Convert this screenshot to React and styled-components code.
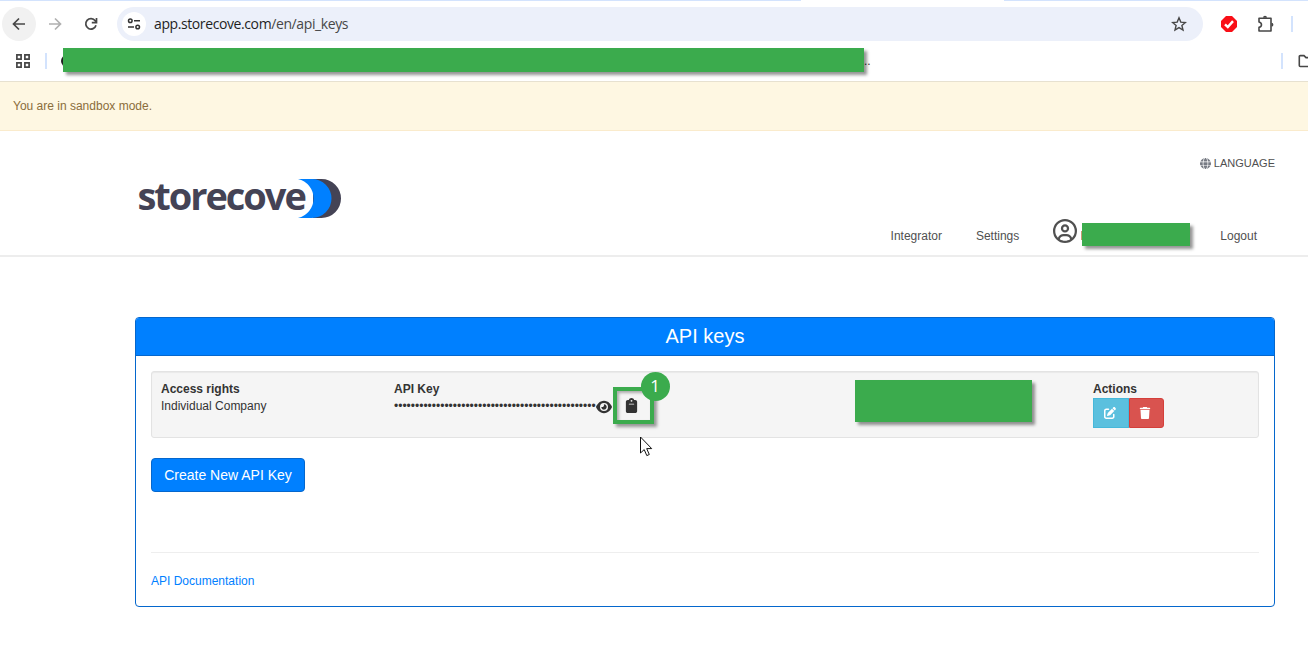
import React from "react";
import styled, { createGlobalStyle } from "styled-components";
import { FaGlobe, FaEye, FaClipboard, FaPenToSquare, FaTrash, FaRegCircleUser } from "react-icons/fa6";

const GlobalStyle = createGlobalStyle`
  *, *::before, *::after { box-sizing: border-box; }
  html, body { margin: 0; background: #fff; overflow: hidden; }
  body { font: 12px/17px "Liberation Sans", Arial, sans-serif; color: #333; }
  svg { display: block; flex: none; }
`;

const Page = styled.div`
  width: 1308px;
  height: 648px;
  overflow: hidden;
`;

/* Browser window */
const TabEdge = styled.div`
  display: flex;
  justify-content: space-between;
  height: 1px;
  background: #fff;
`;
const TabEdgePart = styled.div`
  width: ${(p) => p.$width}px;
  background: #d3e3fd;
`;
const Toolbar = styled.div`
  display: flex;
  align-items: center;
  height: 46px;
  padding-left: 2px;
`;
const RoundButton = styled.div`
  display: flex;
  align-items: center;
  justify-content: center;
  width: 34px;
  height: 34px;
  border-radius: 50%;
  margin-right: ${(p) => p.$gap || 0}px;
  background: ${(p) => (p.$active ? "#f1f1f1" : "transparent")};
`;
const AddressBar = styled.div`
  display: flex;
  align-items: center;
  width: 1086px;
  height: 34px;
  margin-left: 9px;
  padding: 0 16px 0 5px;
  border-radius: 17px;
  background: #ecf0fa;
`;
const SiteInfo = styled.div`
  display: flex;
  align-items: center;
  justify-content: center;
  width: 24px;
  height: 24px;
  border-radius: 50%;
  background: #fff;
`;
const Url = styled.div`
  flex: 1;
  margin-left: 8px;
  font: 14px/20px "Open Sans", "Noto Sans", sans-serif;
  letter-spacing: -0.4px;
  color: #474747;
  b { font-weight: 400; color: #1f1f1f; }
`;
const Separator = styled.div`
  width: 2px;
  height: 16px;
  background: #d3e3fd;
`;
const Extensions = styled.div`
  display: flex;
  align-items: center;
  gap: 20px;
  margin-left: 18px;
  ${Separator} { margin-left: -4px; }
`;
const Bookmarks = styled.div`
  display: flex;
  align-items: center;
  height: 34px;
  padding: 0 0 6px 16px;
  & > ${Separator} { margin-left: 15px; }
`;
const HiddenBookmarks = styled.div`
  display: flex;
  align-items: center;
  margin-left: 14px;
  margin-right: auto;
`;
const Favicon = styled.div`
  width: 12px;
  height: 12px;
  margin-right: -10px;
  border-radius: 50%;
  background: #222;
`;
const Redaction = styled.div`
  position: relative;
  width: ${(p) => p.$width}px;
  height: ${(p) => p.$height}px;
  background: #3bab4d;
  box-shadow: 3px 3px 3px rgba(0, 0, 0, 0.42);
`;
const BookmarkRedaction = styled(Redaction)`
  margin-top: -2px;
`;
const FolderIcon = styled.svg`
  margin-left: 15px;
`;

/* Web page */
const Alert = styled.div`
  height: 50px;
  padding: 16px 13px;
  border-top: 1px solid #e7e1d0;
  border-bottom: 1px solid #faebcc;
  background: #fef7e2;
  color: #8a6d3b;
`;
const Header = styled.header`
  display: flex;
  justify-content: space-between;
  height: 126px;
  padding: 0 33px 0 137px;
  border-bottom: 2px solid #ededed;
`;
const Logo = styled.svg`
  margin-top: 29px;
`;
const HeaderRight = styled.div`
  display: flex;
  flex-direction: column;
  align-items: flex-end;
  color: #505050;
`;
const Language = styled.div`
  display: flex;
  align-items: center;
  gap: 3px;
  margin-top: 24px;
  font-size: 11px;
  svg { color: #777b84; }
`;
const Nav = styled.nav`
  display: flex;
  align-items: flex-start;
  height: 27px;
  margin-top: 47px;
  padding-right: 18px;
`;
const NavItem = styled.div`
  height: 17px;
  margin: 9px ${(p) => p.$gap || 0}px 0 0;
`;
const Account = styled.div`
  display: flex;
  gap: 5px;
  margin-right: 30px;
  ${Redaction} { margin-top: 4px; }
  ${Redaction}::before {
    content: "";
    position: absolute;
    left: -1px;
    top: 8px;
    width: 1px;
    height: 9px;
    background: #c79b72;
  }
`;
const Panel = styled.main`
  width: 1140px;
  height: 290px;
  margin: 60px 0 0 135px;
  border: 1px solid #0567cd;
  border-radius: 4px;
`;
const PanelTitle = styled.h1`
  height: 38px;
  margin: 0;
  border-bottom: 1px solid #0567cd;
  border-radius: 3px 3px 0 0;
  background: #0080ff;
  color: #fff;
  font-size: 20px;
  font-weight: 400;
  line-height: 36px;
  text-align: center;
`;
const PanelBody = styled.div`
  padding: 15px;
`;
const KeyRow = styled.section`
  display: grid;
  grid-template-columns: 233px 461px 238px 1fr;
  height: 67px;
  padding: 8px 9px;
  border: 1px solid #e3e3e3;
  border-radius: 3px;
  background: #f5f5f5;
  box-shadow: inset 0 1px 1px rgba(0, 0, 0, 0.05);
`;
const Label = styled.div`
  height: 18px;
  padding-top: 1px;
  font-weight: 700;
`;
const Value = styled.div`
  display: flex;
  align-items: center;
  height: 17px;
`;
const Secret = styled.span`
  width: 202px;
  white-space: nowrap;
`;
const Callout = styled.div`
  position: relative;
  display: flex;
  align-items: center;
  width: 41px;
  height: 37px;
  margin: -2px 0 0 1px;
  padding-left: 7px;
  border: 4px solid #3bab4d;
  box-shadow: 3px 3px 3px rgba(0, 0, 0, 0.38), inset 2px 2px 3px rgba(0, 0, 0, 0.3);
`;
const StepBadge = styled.span`
  position: absolute;
  top: -19px;
  right: -20px;
  width: 29px;
  height: 29px;
  border-radius: 50%;
  background: #3bab4d;
  color: #fff;
  font: 17px/28px "Open Sans", "Noto Sans", sans-serif;
  text-align: center;
  text-indent: -1px;
`;
const Pointer = styled.svg`
  position: absolute;
  left: 23px;
  top: 45px;
`;
const ButtonGroup = styled.div`
  display: flex;
`;
const IconButton = styled.div`
  display: flex;
  align-items: center;
  justify-content: center;
  width: ${(p) => p.$width}px;
  height: 30px;
  padding: 0 3px 1px 0;
  border: 1px solid ${(p) => (p.$danger ? "#d43f3a" : "#46b8da")};
  border-radius: ${(p) => (p.$danger ? "0 3px 3px 0" : "0")};
  background: ${(p) => (p.$danger ? "#d9534f" : "#5bc0de")};
  color: #fff;
`;
const CreateButton = styled.button`
  display: block;
  width: 154px;
  height: 34px;
  margin-top: 20px;
  padding: 0;
  border: 1px solid #0567cd;
  border-radius: 4px;
  background: #0080ff;
  color: #fff;
  font: 14px/32px "Liberation Sans", Arial, sans-serif;
  white-space: nowrap;
`;
const Documentation = styled.div`
  margin-top: 60px;
  padding-top: 20px;
  border-top: 1px solid #eee;
  color: #0080ff;
`;

const Stroke = ({ size = 16, color = "#474747", width = 1.7, children }) => (
  <svg width={size} height={size} viewBox="0 0 16 16" fill="none" stroke={color} strokeWidth={width}>
    {children}
  </svg>
);

export default function App() {
  return (
    <Page>
      <GlobalStyle />
      <TabEdge>
        <TabEdgePart $width={801} />
        <TabEdgePart $width={304} />
      </TabEdge>
      <Toolbar>
        <RoundButton $active $gap={2}>
          <Stroke><path d="M14 8H3M8 2.5 2.5 8 8 13.5" /></Stroke>
        </RoundButton>
        <RoundButton $gap={2}>
          <Stroke color="#b0b0b0"><path d="M2 8h11M8 2.5 13.5 8 8 13.5" /></Stroke>
        </RoundButton>
        <RoundButton>
          <Stroke><path d="M13 9.2A5.2 5.2 0 1 1 12.2 4.8L13.3 6M13.5 2v4.7H8.8" /></Stroke>
        </RoundButton>
        <AddressBar>
          <SiteInfo>
            <Stroke color="#333" width={1.5}>
              <circle cx="4.3" cy="4.8" r="1.8" />
              <circle cx="11.7" cy="11" r="1.8" />
              <path d="M8 4.8h6M2 11h6" />
            </Stroke>
          </SiteInfo>
          <Url><b>app.storecove.com</b>/en/api_keys</Url>
          <Stroke width={1.4}>
            <path d="m8 1.8 1.8 4.3 4.6.4-3.5 3 1.1 4.5L8 11.6 4 14l1.1-4.5-3.5-3 4.6-.4Z" />
          </Stroke>
        </AddressBar>
        <Extensions>
          <svg width="16" height="16" viewBox="0 0 16 16">
            <path fill="#f90f17" d="M5 0h6l5 5v6l-5 5H5l-5-5V5Z" />
            <path d="m4 8.4 2.8 2.7 5.2-6" fill="none" stroke="#fff" strokeWidth="2.4" />
          </svg>
          <svg width="18" height="18" viewBox="0 0 18 18" fill="none" stroke="#474747" strokeWidth="1.6">
            <path d="M2 3.3h12V16H2v-3.6c3.3-.6 3.3-4.8 0-5.4Z" strokeLinejoin="round" />
            <path d="M6 2.7a2 2 0 0 1 4 0ZM14.500 7.800a1.900 1.900 0 0 1 0 3.800Z" fill="#474747" stroke="none" />
          </svg>
          <Separator />
        </Extensions>
      </Toolbar>
      <Bookmarks>
        <svg width="14" height="14" viewBox="0 0 14 14" fill="none" stroke="#474747" strokeWidth="1.7">
          <path d="M.9.9h4.2v4.2H.9ZM8.9.9h4.2v4.2H8.9ZM.9 8.9h4.2v4.2H.9ZM8.9 8.9h4.2v4.2H8.9Z" />
        </svg>
        <Separator />
        <HiddenBookmarks>
          <Favicon />
          <BookmarkRedaction $width={801} $height={24} />
          <span>..</span>
        </HiddenBookmarks>
        <Separator />
        <FolderIcon width="10" height="14" viewBox="0 0 10 14" fill="none" stroke="#474747" strokeWidth="1.6">
          <path d="M12 12.5H2.300a1 1 0 0 1-1-1V2.600a1 1 0 0 1 1-1H6l2 2h4" />
        </FolderIcon>
      </Bookmarks>

      <Alert>You are in sandbox mode.</Alert>
      <Header>
        <Logo width="206" height="66" viewBox="0 -15 206 66">
          <path fill="#444355" d="M176 4h8.5a19.5 19.5 0 0 1 0 39H176Z" />
          <path fill="#0080ff" d="M161 4h14a19.5 19.5 0 0 1 0 39h-14a20 20 0 0 0 0-39Z" />
          <text x="0.5" y="35" fill="#444355" fontFamily="Open Sans, Noto Sans, sans-serif" fontWeight="700" fontSize="38" letterSpacing="-2.05">storecove</text>
        </Logo>
        <HeaderRight>
          <Language><FaGlobe size={11} />LANGUAGE</Language>
          <Nav>
            <NavItem $gap={34}>Integrator</NavItem>
            <NavItem $gap={34}>Settings</NavItem>
            <Account>
              <FaRegCircleUser size={24} />
              <Redaction $width={108} $height={23} />
            </Account>
            <NavItem>Logout</NavItem>
          </Nav>
        </HeaderRight>
      </Header>

      <Panel>
        <PanelTitle>API keys</PanelTitle>
        <PanelBody>
          <KeyRow>
            <div>
              <Label>Access rights</Label>
              <Value>Individual Company</Value>
            </div>
            <div>
              <Label>API Key</Label>
              <Value>
                <Secret>{"•".repeat(48)}</Secret>
                <FaEye size={16} />
                <Callout>
                  <FaClipboard size={15} />
                  <StepBadge>1</StepBadge>
                  <Pointer width="14" height="21" viewBox="0 0 14 21">
                    <path d="M.5 1v16l3.7-3.4 2.6 6 2.5-1.1-2.6-5.900h5Z" fill="#fff" stroke="#111" />
                  </Pointer>
                </Callout>
              </Value>
            </div>
            <Redaction $width={177} $height={42} />
            <div>
              <Label>Actions</Label>
              <ButtonGroup>
                <IconButton $width={36}><FaPenToSquare size={12} /></IconButton>
                <IconButton $width={35} $danger><FaTrash size={12} /></IconButton>
              </ButtonGroup>
            </div>
          </KeyRow>
          <CreateButton>Create New API Key</CreateButton>
          <Documentation>API Documentation</Documentation>
        </PanelBody>
      </Panel>
    </Page>
  );
}
